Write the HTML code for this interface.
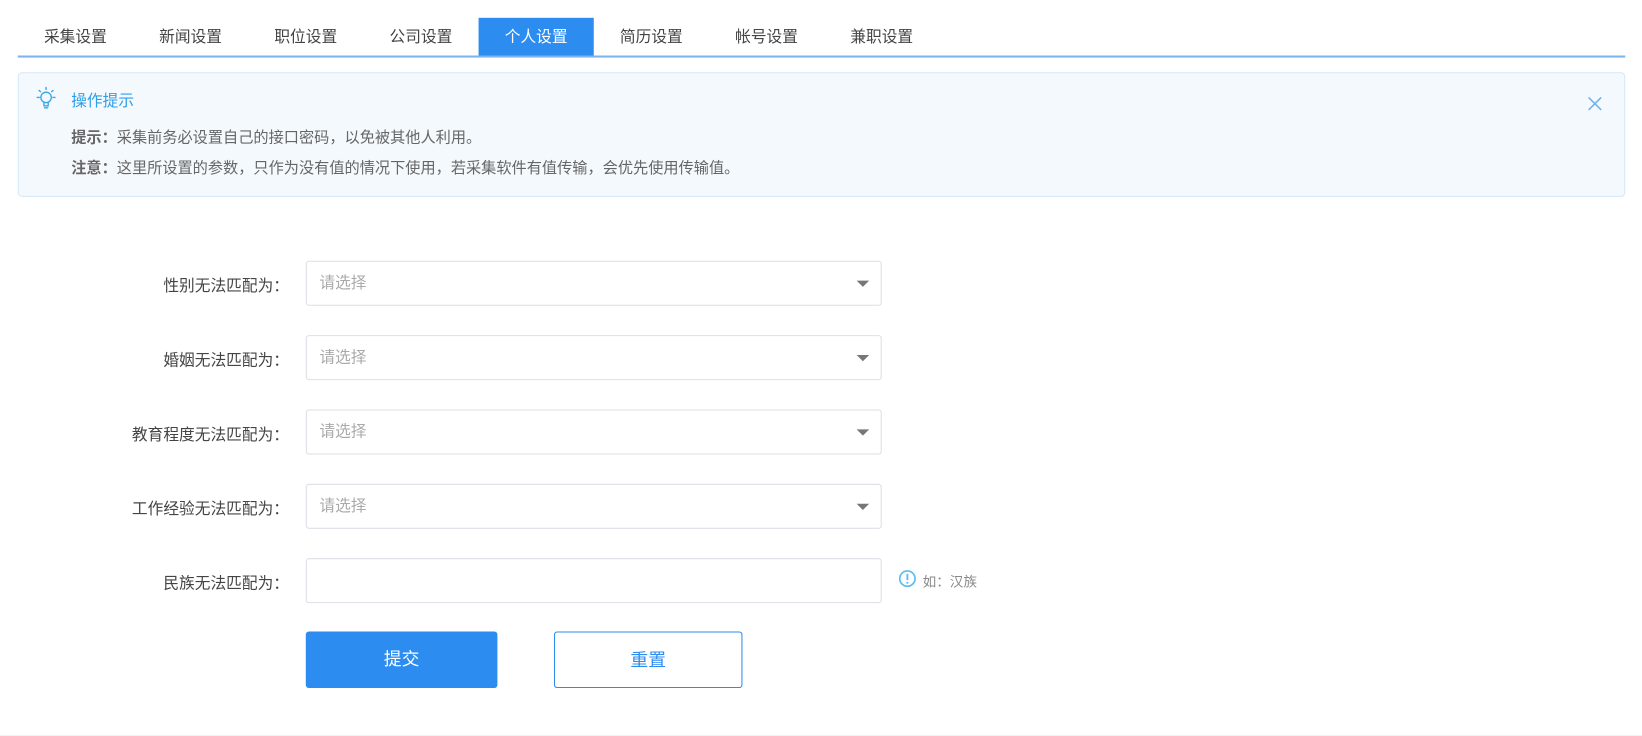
<!DOCTYPE html>
<html><head><meta charset="utf-8"><style>
html,body{margin:0;background:#fff;overflow:hidden}
body{width:1642px;height:736px;position:relative}
#w{position:absolute;left:0;top:0;width:1568px;height:703px;transform:scale(1.0472);transform-origin:0 0;font-family:"Liberation Sans","Noto Sans CJK SC",sans-serif;color:#555}
.tabs{position:absolute;left:17px;top:17px;width:1535px;height:36px;border-bottom:2px solid #7ab5ee}
.tab{position:absolute;top:0;width:110px;height:36px;line-height:37px;text-align:center;font-size:15px;color:#444}
.tab.on{background:#2d8cf0;color:#fff}
.tip{position:absolute;left:17px;top:69px;width:1533px;height:117px;border:1px solid #d6e7f7;border-radius:4px;background:#f4f9fd}
.tip .t{position:absolute;left:50px;top:15px;font-size:15px;color:#2d9ee8}
.tip .l{position:absolute;left:50px;font-size:14.5px;color:#666}
.tip b{color:#666}
.lab{position:absolute;right:1292px;font-size:15px;color:#444;text-align:right;white-space:nowrap}
.sel{position:absolute;left:292px;width:548px;height:41px;border:1px solid #dcdfe6;border-radius:3px;font-size:15px;color:#aaa;line-height:42px;text-indent:12px}
.sel .a{position:absolute;right:11px;top:18px;width:0;height:0;border-left:6px solid transparent;border-right:6px solid transparent;border-top:6px solid #777}
.btn{position:absolute;top:603px;height:54px;border-radius:3px;font-size:17px;line-height:54px;text-align:center;box-sizing:border-box}
</style></head><body><div id="w">
<div class="tabs">
<div class="tab" style="left:0">采集设置</div>
<div class="tab" style="left:110px">新闻设置</div>
<div class="tab" style="left:220px">职位设置</div>
<div class="tab" style="left:330px">公司设置</div>
<div class="tab on" style="left:440px">个人设置</div>
<div class="tab" style="left:550px">简历设置</div>
<div class="tab" style="left:660px">帐号设置</div>
<div class="tab" style="left:770px">兼职设置</div>
</div>
<div class="tip">
<svg style="position:absolute;left:15px;top:12px" width="22" height="24" viewBox="0 0 22 24" fill="none" stroke="#39a6e8" stroke-width="1.3"><circle cx="11" cy="11" r="5"/><path d="M9 16v3h4v-3M9 21h4M11 1v3M2 11h3M17 11h3M4 4l2 2M18 4l-2 2"/></svg>
<div class="t">操作提示</div>
<div class="l" style="top:50px"><b>提示：</b>采集前务必设置自己的接口密码，以免被其他人利用。</div>
<div class="l" style="top:79px"><b>注意：</b>这里所设置的参数，只作为没有值的情况下使用，若采集软件有值传输，会优先使用传输值。</div>
<svg style="position:absolute;right:21px;top:22px" width="14" height="14" viewBox="0 0 14 14" stroke="#6fb3ea" stroke-width="1.5"><path d="M1 1l12 12M13 1L1 13"/></svg>
</div>
<div class="lab" style="top:262px">性别无法匹配为：</div>
<div class="sel" style="top:249px">请选择<div class="a"></div></div>
<div class="lab" style="top:333px">婚姻无法匹配为：</div>
<div class="sel" style="top:320px">请选择<div class="a"></div></div>
<div class="lab" style="top:404px">教育程度无法匹配为：</div>
<div class="sel" style="top:391px">请选择<div class="a"></div></div>
<div class="lab" style="top:475px">工作经验无法匹配为：</div>
<div class="sel" style="top:462px">请选择<div class="a"></div></div>
<div class="lab" style="top:546px">民族无法匹配为：</div>
<div class="sel" style="top:533px"></div>
<svg style="position:absolute;left:858px;top:544px" width="17" height="17" viewBox="0 0 17 17"><circle cx="8.5" cy="8.5" r="7.3" fill="none" stroke="#5bbcf0" stroke-width="1.6"/><path d="M8.5 4v6" stroke="#5bbcf0" stroke-width="1.8"/><circle cx="8.5" cy="12.5" r="1" fill="#5bbcf0"/></svg>
<div style="position:absolute;left:881px;top:545px;font-size:13px;color:#888">如：汉族</div>
<div class="btn" style="left:292px;width:183px;background:#2d8cf0;color:#fff">提交</div>
<div class="btn" style="left:529px;width:180px;border:1px solid #2d8cf0;color:#2d8cf0;background:#fff">重置</div>
<div style="position:absolute;left:0;top:702px;width:1568px;height:1px;background:#f0f0f0"></div>
</div></body></html>
